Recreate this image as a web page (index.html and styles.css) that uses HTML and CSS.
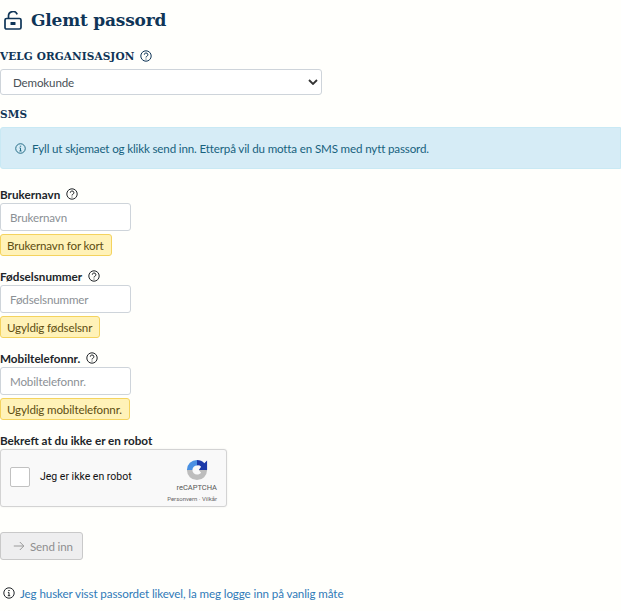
FILE: index.html
```html
<!DOCTYPE html>
<html lang="no">
<head>
<meta charset="utf-8">
<title>Glemt passord</title>
<link rel="stylesheet" href="styles.css">
</head>
<body>
<main class="page">
  <h1 class="title">
    <svg class="lock" viewBox="0 0 18 19" width="18" height="19" fill="none" stroke="#0f3557" stroke-width="1.7"><rect x="1" y="7.500" width="16" height="10.500" rx="1.600"/><path d="M4.500 7.500V5a4.500 4.500 0 0 1 8.700-1.600"/><rect x="6.500" y="11" width="5" height="3" rx=".6" fill="#0f3557" stroke="none"/></svg>
    Glemt passord
  </h1>
  <h2 class="org-label">VELG ORGANISASJON
    <svg class="help help-navy" viewBox="0 0 12 12" width="12" height="12"><circle cx="6" cy="6" r="5.2"/><path d="M4.3 4.7a1.8 1.7 0 1 1 2.6 1.5c-.6.3-.9.6-.9 1.3"/><path d="M6 8.6v.9"/></svg>
  </h2>
  <div class="select">
    <span>Demokunde</span>
    <svg viewBox="0 0 10 6" width="10" height="6" fill="none" stroke="#333" stroke-width="1.8"><path d="M1 1l4 4 4-4"/></svg>
  </div>
  <h2 class="sms">SMS</h2>
  <div class="alert">
    <svg class="info" viewBox="0 0 12 12" width="11" height="11"><circle cx="6" cy="6" r="5.2"/><path d="M6 5.5v3.2M4.8 8.7h2.4M4.9 5.4H6"/><path d="M6 3v1" stroke-width="1.4"/></svg>
    <span>Fyll ut skjemaet og klikk send inn. Etterpå vil du motta en SMS med nytt passord.</span>
  </div>

  <div class="field first">
    <label class="lbl">Brukernavn <svg class="help" viewBox="0 0 12 12" width="12" height="12"><circle cx="6" cy="6" r="5.2"/><path d="M4.3 4.7a1.8 1.7 0 1 1 2.6 1.5c-.6.3-.9.6-.9 1.3"/><path d="M6 8.6v.9"/></svg></label>
    <div class="input">Brukernavn</div>
    <div class="warn">Brukernavn for kort</div>
  </div>
  <div class="field">
    <label class="lbl">Fødselsnummer <svg class="help" viewBox="0 0 12 12" width="12" height="12"><circle cx="6" cy="6" r="5.2"/><path d="M4.3 4.7a1.8 1.7 0 1 1 2.6 1.5c-.6.3-.9.6-.9 1.3"/><path d="M6 8.6v.9"/></svg></label>
    <div class="input">Fødselsnummer</div>
    <div class="warn">Ugyldig fødselsnr</div>
  </div>
  <div class="field">
    <label class="lbl">Mobiltelefonnr. <svg class="help" viewBox="0 0 12 12" width="12" height="12"><circle cx="6" cy="6" r="5.2"/><path d="M4.3 4.7a1.8 1.7 0 1 1 2.6 1.5c-.6.3-.9.6-.9 1.3"/><path d="M6 8.6v.9"/></svg></label>
    <div class="input">Mobiltelefonnr.</div>
    <div class="warn">Ugyldig mobiltelefonnr.</div>
  </div>

  <div class="lbl robot-lbl">Bekreft at du ikke er en robot</div>
  <div class="captcha">
    <span class="check"></span>
    <span class="captcha-text">Jeg er ikke en robot</span>
    <div class="brand">
      <svg class="brand-logo" viewBox="0 0 24 24" width="22" height="22"><path d="M1 12A11 11 0 0 1 12 1v6a5 5 0 0 0-5 5z" fill="#4a90e2"/><path d="M12 1a11 11 0 0 1 8 3.500L23 1.500V12h-9l2.500-3.500A5 5 0 0 0 12 7z" fill="#1c3aa9"/><path d="M1 12h6a5 5 0 0 0 5 5c2 0 3.500-1 4.500-2L14 12h9a11 11 0 0 1-22 0z" fill="#bdbdbd"/></svg>
      <div class="brand-name">reCAPTCHA</div>
      <div class="brand-links">Personvern · Vilkår</div>
    </div>
  </div>

  <button class="send" disabled>
    <svg viewBox="0 0 12 12" width="12" height="12" fill="none" stroke="#9a9a9a" stroke-width="1"><path d="M.8 6h10M6.800 2l4 4-4 4"/></svg>
    Send inn
  </button>

  <p class="foot">
    <svg class="info-dark" viewBox="0 0 12 12" width="12" height="12"><circle cx="6" cy="6" r="5.2"/><path d="M6 5.5v3.2M4.8 8.7h2.4M4.9 5.4H6"/><path d="M6 3v1" stroke-width="1.4"/></svg>
    <a href="#">Jeg husker visst passordet likevel, la meg logge inn på vanlig måte</a>
  </p>
</main>
</body>
</html>
```

FILE: styles.css
```css
* { box-sizing: border-box; }
html, body { margin: 0; padding: 0; }
body {
  background: #fffffc;
  font-family: Lato, "Noto Sans", sans-serif;
  font-size: 11.600px;
  letter-spacing: -.15px;
  color: #212529;
  overflow: hidden;
}
.page { display: flex; flex-direction: column; align-items: flex-start; height: 611px; }
svg { flex: none; }
.title {
  display: flex; align-items: center; gap: 9px;
  margin: 8px 0 0 4px; height: 24px;
  font-family: "DejaVu Serif", serif;
  font-size: 17px; font-weight: 700; color: #0f3557; letter-spacing: -.2px;
}
.org-label, .sms {
  margin: 0;
  font-family: "DejaVu Serif", serif;
  font-size: 10.500px; font-weight: 700; color: #0f3557; letter-spacing: .1px;
}
.org-label { display: flex; align-items: center; gap: 6px; margin-top: 16px; height: 16px; }
.help, .help-navy, .info, .info-dark { fill: none; stroke-width: 1; }
.help { stroke: #212529; }
.help-navy { stroke: #0f3557; }
.info { stroke: #17627e; }
.info-dark { stroke: #212529; }
.select {
  display: flex; align-items: center; justify-content: space-between;
  width: 322px; height: 26px; margin-top: 5px; padding: 0 3px 0 12px;
  background: #fff; border: 1px solid #ced4da; border-radius: 3px;
  color: #495057;
}
.sms { margin-top: 11px; height: 16px; line-height: 16px; }
.alert {
  display: flex; align-items: center; gap: 6px;
  width: 100%; height: 42px; margin-top: 5px; padding: 0 0 0 14px;
  background: #d6ecf6; border: 1px solid #c9e9f4; border-radius: 3px 0 0 3px;
  color: #17627e;
}
.field { display: flex; flex-direction: column; align-items: flex-start; margin-top: 13px; }
.field.first { margin-top: 18px; }
.lbl {
  display: flex; align-items: center; gap: 6px;
  height: 15px; padding-bottom: 1px; font-size: 11.700px; letter-spacing: 0; font-weight: 700; color: #212529;
}
.input {
  display: flex; align-items: center;
  width: 131px; height: 28px; margin-top: 1px; padding-left: 9px;
  background: #fff; border: 1px solid #ced4da; border-radius: 3px;
  color: #8b9095;
}
.warn {
  display: flex; align-items: center;
  height: 22px; margin-top: 3px; padding: 0 7px 0 6px;
  background: #fff2b8; border: 1px solid #f4d35e; border-radius: 3px;
  color: #5e4e12;
}
.robot-lbl { margin-top: 13px; }
.captcha {
  display: flex; align-items: center;
  width: 227px; height: 58px; margin-top: 1px; padding: 0 9px;
  background: #f9f9f9; border: 1px solid #d3d3d3; border-radius: 3px;
  box-shadow: 0 0 2px rgba(0, 0, 0, .08);
  letter-spacing: 0;
}
.check {
  width: 20px; height: 20px; margin-bottom: 2px; background: #fff;
  border: 1px solid #c1c1c1; border-radius: 2px;
}
.captcha-text {
  margin: 0 0 3px 10px; font-family: Roboto, sans-serif; font-size: 10.500px; color: #111;
}
.brand {
  display: flex; flex-direction: column; align-items: flex-end;
  margin-left: auto; padding-top: 6px;
}
.brand-logo { margin-right: 9px; }
.brand-name { font-family: Roboto, sans-serif; font-size: 7.500px; color: #555; margin-top: 2px; line-height: 9px; }
.brand-links { font-family: Roboto, sans-serif; font-size: 6px; color: #666; margin-top: 3px; line-height: 8px; }
.send {
  display: flex; align-items: center; gap: 5px;
  width: 83px; height: 28px; margin-top: 25px; padding: 0 0 0 12px;
  background: #eeeeef; border: 1px solid #c9c9c9; border-radius: 3px;
  font-family: inherit; font-size: 11.600px; letter-spacing: -.15px; color: #8f8f8f;
}
.foot {
  display: flex; align-items: center; gap: 5px;
  margin: 25px 0 0 3px; height: 16px; letter-spacing: -.1px;
}
.foot a { color: #2f7ab8; text-decoration: none; }
```
